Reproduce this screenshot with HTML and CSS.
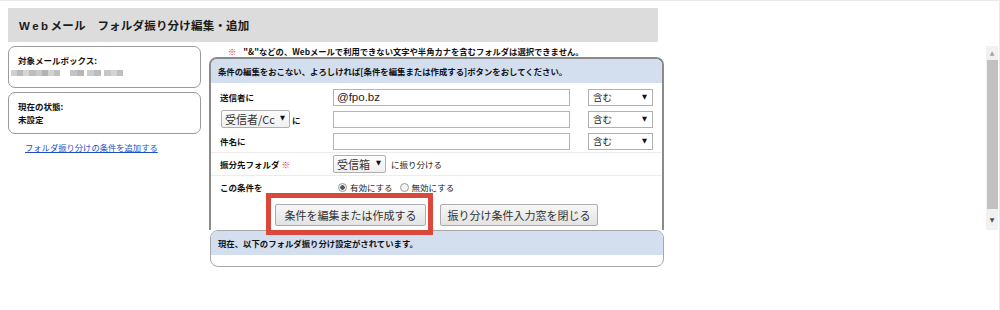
FILE: index.html
```html
<!DOCTYPE html>
<html lang="ja">
<head>
<meta charset="utf-8">
<title>Webメール フォルダ振り分け編集・追加</title>
<link rel="stylesheet" href="styles.css">
</head>
<body>
<div class="page">
  <header class="header">
    <h1 class="title"><span class="web">Web</span>メール　フォルダ振り分け編集・追加</h1>
  </header>
  <div class="content">
    <aside class="side">
      <div class="box">
        <p class="lbl">対象メールボックス:</p>
        <div class="mosaic"></div>
      </div>
      <div class="box">
        <p class="lbl">現在の状態:</p>
        <p class="lbl">未設定</p>
      </div>
      <a class="addlink" href="#">フォルダ振り分けの条件を追加する</a>
    </aside>
    <main class="main">
      <p class="warn"><span class="mark">※</span>"&amp;"などの、Webメールで利用できない文字や半角カナを含むフォルダは選択できません。</p>
      <section class="panel">
        <div class="panel-head">条件の編集をおこない、よろしければ[条件を編集または作成する]ボタンをおしてください。</div>
        <div class="form">
          <div class="row">
            <span class="lbl">送信者に</span>
            <span class="inp">@fpo.bz</span>
            <span class="sel sel-w">含む<span class="arr">▼</span></span>
          </div>
          <div class="row">
            <span class="lblsel"><span class="sel sel-g sel-rc">受信者/Cc<span class="arr">▼</span></span><span class="lbl">に</span></span>
            <span class="inp"></span>
            <span class="sel sel-w">含む<span class="arr">▼</span></span>
          </div>
          <div class="row line">
            <span class="lbl">件名に</span>
            <span class="inp"></span>
            <span class="sel sel-w">含む<span class="arr">▼</span></span>
          </div>
          <div class="row line">
            <span class="lbl">振分先フォルダ <span class="mark">※</span></span>
            <span class="folder"><span class="sel sel-g sel-box">受信箱<span class="arr">▼</span></span><span class="small">に振り分ける</span></span>
          </div>
          <div class="row">
            <span class="lbl">この条件を</span>
            <span class="radios">
              <span class="radio on"></span><span class="small">有効にする</span>
              <span class="radio"></span><span class="small">無効にする</span>
            </span>
          </div>
          <div class="buttons">
            <span class="hl-wrap"><button class="btn btn1">条件を編集または作成する</button><span class="hl"></span></span>
            <button class="btn btn2">振り分け条件入力窓を閉じる</button>
          </div>
        </div>
      </section>
      <section class="list">
        <div class="list-head">現在、以下のフォルダ振り分け設定がされています。</div>
      </section>
    </main>
    <div class="scroll">
      <span class="sc-up">▲</span>
      <span class="sc-thumb"></span>
      <span class="sc-down">▼</span>
    </div>
  </div>
</div>
</body>
</html>
```

FILE: styles.css
```css
html, body {
  margin: 0;
  padding: 0;
  background: #fff;
}
body {
  font-family: "Liberation Sans", "Noto Sans CJK JP", sans-serif;
  color: #111;
}
.page {
  width: 1000px;
  height: 310px;
  box-sizing: border-box;
  border-top: 1px solid #e9e9e9;
  border-right: 1px solid #e9e9e9;
  padding: 7px 0 0 8px;
}
.header {
  width: 650px;
  height: 34px;
  background: #dcdcdc;
  display: flex;
  align-items: center;
  padding-left: 11px;
  box-sizing: border-box;
}
.title {
  margin: 0;
  font-family: "Noto Sans CJK JP", sans-serif;
  font-size: 11.5px;
  font-weight: bold;
  color: #1a1a1a;
  letter-spacing: 0.2px;
}
.web {
  letter-spacing: 2.5px;
  font-family: "Liberation Sans", sans-serif;
}
.content {
  display: flex;
  margin-top: 4px;
}
.side {
  width: 193px;
  display: flex;
  flex-direction: column;
  gap: 4px;
}
.box {
  height: 42px;
  box-sizing: border-box;
  border: 1px solid #9a9a9a;
  border-radius: 7px;
  padding: 7px 0 0 9px;
}
.lbl {
  margin: 0;
  font-family: "Noto Sans CJK JP", sans-serif;
  font-size: 8.5px;
  font-weight: bold;
  line-height: 13px;
  color: #111;
}
.mosaic {
  margin: 3px 0 0 -7px;
  width: 112px;
  height: 6px;
  background: linear-gradient(90deg,
    #cfcfcf 0 6px, #b9b9b9 6px 12px, #d6d6d6 12px 18px, #bdbdbd 18px 25px,
    #cacaca 25px 31px, #b3b3b3 31px 37px, #d2d2d2 37px 43px, #c0c0c0 43px 49px,
    #fff 49px 59px, #c4c4c4 59px 66px, #b7b7b7 66px 73px, #fff 73px 76px,
    #cdcdcd 76px 83px, #bcbcbc 83px 90px, #fff 90px 93px, #c6c6c6 93px 100px,
    #d4d4d4 100px 106px, #bfbfbf 106px 112px);
}
.addlink {
  margin: 3px 0 0 17px;
  font-family: "Noto Sans CJK JP", sans-serif;
  font-size: 8.3px;
  color: #1f4fc0;
  text-decoration: underline;
  line-height: 12px;
}
.main {
  width: 455px;
  margin-left: 8px;
  display: flex;
  flex-direction: column;
}
.warn {
  margin: 0;
  height: 11px;
  line-height: 11px;
  padding-left: 19px;
  font-family: "Noto Sans CJK JP", sans-serif;
  font-size: 8.3px;
  font-weight: bold;
  color: #111;
}
.warn .mark {
  margin-right: 7px;
}
.mark {
  color: #e2343d;
}
.panel {
  height: 173px;
  box-sizing: border-box;
  border: 2px solid #8a8a8a;
  border-bottom: none;
  border-radius: 8px 8px 0 0;
  overflow: visible;
}
.panel-head {
  height: 24px;
  background: #d3deef;
  border-radius: 6px 6px 0 0;
  padding-left: 7px;
  font-family: "Noto Sans CJK JP", sans-serif;
  font-size: 8.4px;
  font-weight: bold;
  line-height: 24px;
  color: #111;
}
.form {
  padding-top: 3px;
}
.row {
  display: grid;
  grid-template-columns: 95px 237px 65px;
  column-gap: 18px;
  align-items: center;
  height: 22px;
  padding-left: 9px;
}
.row.line {
  border-bottom: 1px solid #ececec;
}
.inp {
  height: 17px;
  box-sizing: border-box;
  border: 1px solid #b4b4b4;
  background: #fff;
  font-size: 11.5px;
  line-height: 15px;
  padding-left: 3px;
  color: #222;
}
.sel {
  position: relative;
  display: inline-block;
  box-sizing: border-box;
  border: 1px solid #b0b0b0;
  font-family: "Noto Sans CJK JP", sans-serif;
  color: #222;
}
.sel .arr {
  position: absolute;
  right: 4px;
  top: 0;
  font-size: 6.5px;
  font-family: "DejaVu Sans", sans-serif;
  color: #111;
}
.sel-w {
  height: 17px;
  font-size: 9.5px;
  line-height: 15px;
  padding-left: 4px;
  background: #fff;
}
.sel-w .arr {
  line-height: 15px;
  right: 5px;
}
.sel-g {
  height: 18px;
  font-size: 11px;
  line-height: 16px;
  padding-left: 3px;
  background: linear-gradient(#fcfcfc, #f0f0f0);
  border-radius: 2px;
  color: #333;
}
.sel-g .arr {
  line-height: 14px;
}
.sel-rc {
  width: 69px;
  margin-left: 1px;
}
.sel-box {
  width: 53px;
}
.lblsel {
  display: flex;
  align-items: center;
  gap: 2px;
}
.lblsel .lbl {
  margin-top: 2px;
}
.folder {
  grid-column: 2 / 4;
  display: flex;
  align-items: center;
  gap: 5px;
}
.small {
  font-family: "Noto Sans CJK JP", sans-serif;
  font-size: 8.5px;
  color: #222;
}
.radios {
  grid-column: 2 / 4;
  display: flex;
  align-items: center;
  padding-left: 5px;
  gap: 3px;
}
.radio {
  width: 9px;
  height: 9px;
  box-sizing: border-box;
  border: 1px solid #9a9a9a;
  border-radius: 50%;
  background: #f4f4f4;
}
.radio.on {
  background: radial-gradient(circle, #555 0 2px, #f4f4f4 2.5px);
}
.radios .small + .radio {
  margin-left: 4px;
}
.buttons {
  display: flex;
  justify-content: center;
  gap: 14px;
  padding-top: 6px;
}
.hl-wrap {
  position: relative;
  display: inline-flex;
}
.btn {
  height: 22px;
  box-sizing: border-box;
  border: 1px solid #acacac;
  border-radius: 2px;
  background: linear-gradient(#f7f7f7, #e3e3e3);
  font-family: "Noto Sans CJK JP", sans-serif;
  font-size: 11px;
  color: #333;
  padding: 0;
  line-height: 20px;
}
.btn1 {
  width: 151px;
}
.btn2 {
  width: 158px;
}
.hl {
  position: absolute;
  top: -11px;
  left: -9px;
  right: -7px;
  bottom: -9px;
  border: 5px solid #d9483b;
  pointer-events: none;
}
.list {
  height: 37px;
  box-sizing: border-box;
  margin-left: 1px;
  border: 1px solid #a8a8a8;
  border-radius: 8px;
  overflow: hidden;
  background: #fff;
}
.list-head {
  height: 24px;
  background: #d3deef;
  padding-left: 7px;
  font-family: "Noto Sans CJK JP", sans-serif;
  font-size: 8.4px;
  font-weight: bold;
  line-height: 24px;
  color: #111;
}
.scroll {
  margin-left: auto;
  margin-right: 1px;
  width: 12px;
  height: 184px;
  background: #f1f1f1;
  display: flex;
  flex-direction: column;
  align-items: center;
}
.sc-up, .sc-down {
  height: 14px;
  font-family: "DejaVu Sans", sans-serif;
  font-size: 6px;
  line-height: 14px;
  color: #a3a3a3;
}
.sc-down {
  height: 21px;
  line-height: 21px;
  color: #505050;
}
.sc-thumb {
  width: 11px;
  margin-left: 1px;
  flex: 1;
  background: #c1c1c1;
}
```
